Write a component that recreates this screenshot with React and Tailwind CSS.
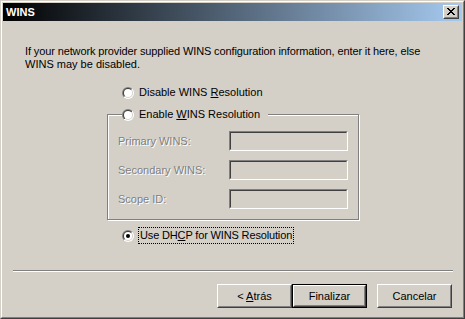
import React, { useId } from "react";

function Radio({ checked }) {
  const id = useId().replace(/[^a-zA-Z0-9]/g, "");
  return (
    <svg width="12" height="12" viewBox="0 0 12 12" className="block shrink-0">
      <defs>
        <linearGradient id={`o${id}`} x1="0" y1="0" x2="1" y2="1">
          <stop offset="0.5" stopColor="#808080" />
          <stop offset="0.5" stopColor="#ffffff" />
        </linearGradient>
        <linearGradient id={`i${id}`} x1="0" y1="0" x2="1" y2="1">
          <stop offset="0.5" stopColor="#404040" />
          <stop offset="0.5" stopColor="#d4d0c8" />
        </linearGradient>
      </defs>
      <circle cx="6" cy="6" r="6" fill={`url(#o${id})`} />
      <circle cx="6" cy="6" r="5" fill={`url(#i${id})`} />
      <circle cx="6" cy="6" r="4" fill="#fff" />
      {checked && <circle cx="6" cy="6" r="2" fill="#000" />}
    </svg>
  );
}

function CloseGlyph() {
  const rows = [
    "XX....XX",
    ".XX..XX.",
    "..XXXX..",
    "...XX...",
    "..XXXX..",
    ".XX..XX.",
    "XX....XX",
  ];
  const rects = [];
  rows.forEach((r, y) =>
    r.split("").forEach((c, x) => {
      if (c === "X") rects.push(<rect key={`${x}-${y}`} x={x} y={y} width="1" height="1" fill="#000" />);
    })
  );
  return (
    <svg width="8" height="7" viewBox="0 0 8 7" shapeRendering="crispEdges" className="block">
      {rects}
    </svg>
  );
}

function Field({ label }) {
  return (
    <div className="flex h-[20px] items-center">
      <span className="w-[111px] text-[#808080] [text-shadow:1px_1px_0_#ffffff]">{label}</span>
      <div className="h-[20px] w-[119px] border border-t-[#808080] border-l-[#808080] border-r-white border-b-white">
        <div className="h-full w-full border border-t-[#404040] border-l-[#404040] border-r-[#d4d0c8] border-b-[#d4d0c8] bg-[#d4d0c8]" />
      </div>
    </div>
  );
}

function Button({ children, isDefault }) {
  if (isDefault) {
    return (
      <div className="h-[24px] w-[75px] border border-black">
        <div className="flex h-full w-full items-center justify-center border border-t-white border-l-white border-r-[#404040] border-b-[#404040]">
          <div className="flex h-full w-full items-center justify-center border border-t-[#d4d0c8] border-l-[#d4d0c8] border-r-[#808080] border-b-[#808080]">
            <span>{children}</span>
          </div>
        </div>
      </div>
    );
  }
  return (
    <div className="h-[24px] w-[75px] border border-t-white border-l-white border-r-[#404040] border-b-[#404040]">
      <div className="flex h-full w-full items-center justify-center border border-t-[#d4d0c8] border-l-[#d4d0c8] border-r-[#808080] border-b-[#808080]">
        <span>{children}</span>
      </div>
    </div>
  );
}

export default function App() {
  return (
    <div className="h-[319px] w-[465px] overflow-hidden border border-t-[#d4d0c8] border-l-[#d4d0c8] border-r-[#404040] border-b-[#404040] bg-[#d4d0c8] font-['Liberation_Sans',Arial,sans-serif] text-[11px] leading-[13px] text-black">
      <div className="flex h-full flex-col border border-t-white border-l-white border-r-[#808080] border-b-[#808080] p-px">
        {/* Title bar */}
        <div className="flex h-[18px] shrink-0 items-center justify-between bg-[linear-gradient(to_right,#000000,#a6caf0)] pl-[3px] pr-[3px]">
          <span className="font-bold text-white">WINS</span>
          <div className="h-[14px] w-[16px] border border-t-white border-l-white border-r-[#404040] border-b-[#404040] bg-[#d4d0c8]">
            <div className="flex h-full w-full items-center justify-center border border-t-[#d4d0c8] border-l-[#d4d0c8] border-r-[#808080] border-b-[#808080] pb-px pr-px">
              <CloseGlyph />
            </div>
          </div>
        </div>

        {/* Content */}
        <p className="ml-[22px] mt-[24px]">
          <span className="tracking-[-0.12px]">
            If your network provider supplied WINS configuration information, enter it here, else
          </span>
          <br />
          WINS may be disabled.
        </p>

        <div className="ml-[119px] mt-[15px] flex h-[13px] items-center gap-[5px]">
          <Radio />
          <span>
            Disable WINS <span className="underline">R</span>esolution
          </span>
        </div>

        <fieldset className="ml-[104px] mt-[9px] w-[252px] border border-[#808080] pb-[10px] pl-[10px] shadow-[1px_1px_0_#ffffff,inset_1px_1px_0_#ffffff]">
          <legend className="ml-[4px] bg-[#d4d0c8] pr-[8px]">
            <div className="flex h-[13px] items-center gap-[5px]">
              <Radio />
              <span>
                Enable <span className="underline">W</span>INS Resolution
              </span>
            </div>
          </legend>
          <div className="mt-[10px] flex flex-col gap-[9px]">
            <Field label="Primary WINS:" />
            <Field label="Secondary WINS:" />
            <Field label="Scope ID:" />
          </div>
        </fieldset>

        <div className="ml-[119px] mt-[7px] flex items-center gap-[4px]">
          <Radio checked />
          <span className="border border-dotted border-black px-px py-px tracking-[-0.15px]">
            Use DH<span className="underline">C</span>P for WINS Resolution
          </span>
        </div>

        <div className="ml-[10px] mt-[26px] h-[2px] w-[440px] border-t border-b border-t-[#808080] border-b-white" />

        <div className="mt-[12px] flex justify-end pr-[10px]">
          <Button>
            &lt; <span className="underline">A</span>trás
          </Button>
          <Button isDefault>Finalizar</Button>
          <div className="w-[10px]" />
          <Button>Cancelar</Button>
        </div>
      </div>
    </div>
  );
}
